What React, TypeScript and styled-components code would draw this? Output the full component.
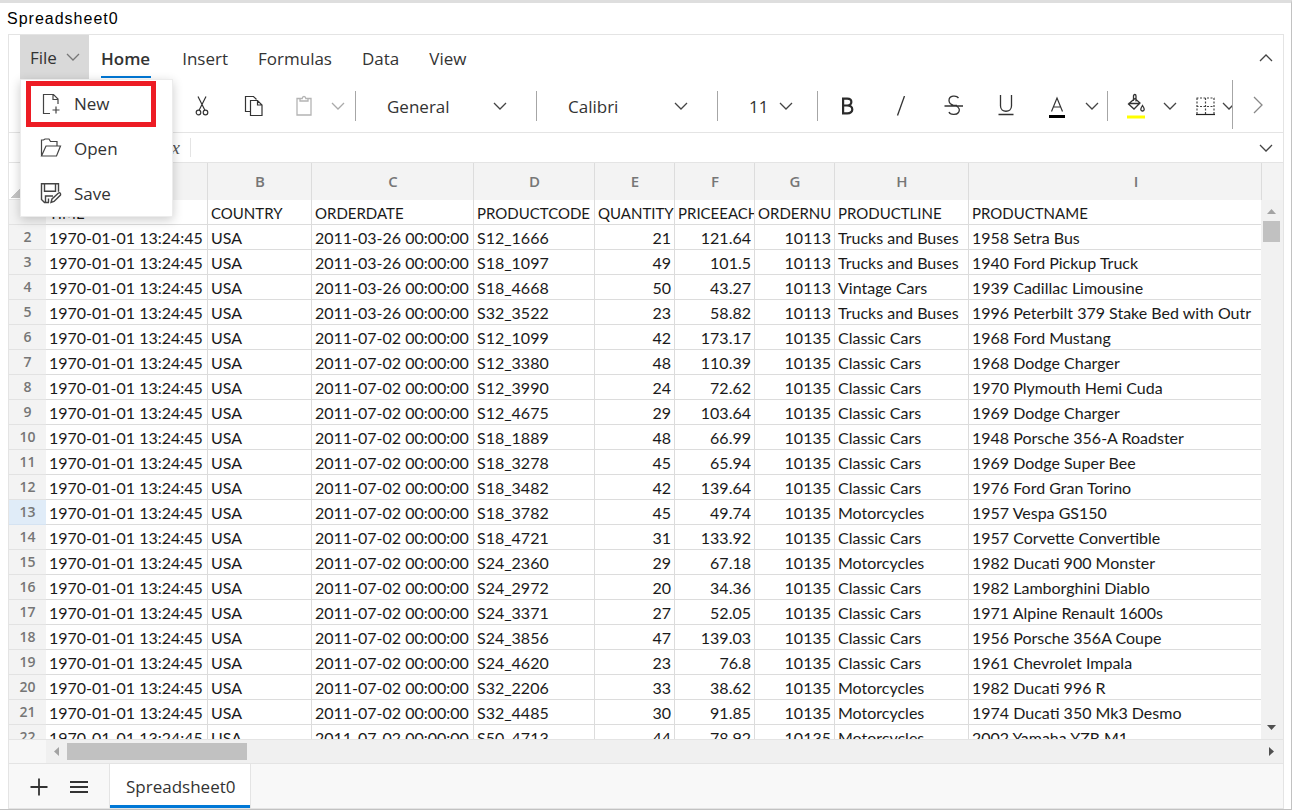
import React from "react";
import styled, { createGlobalStyle, css } from "styled-components";

const ui = '"Open Sans", "Noto Sans", sans-serif';
const cellFont = 'Lato, "Open Sans", sans-serif';
const line = "#dcdcdc";
const edge = "#e4e4e4";
const accent = "#0078d6";

const Global = createGlobalStyle`
  *, *::before, *::after { box-sizing: border-box; }
  body { margin: 0; background: #fff; }
  button, input, select { font: inherit; color: inherit; }
`;

const Page = styled.div`
  display: flex;
  flex-direction: column;
  height: 100vh;
  border-top: 3px solid #dedede;
  border-right: 1px solid #c2c2c2;
  border-bottom: 1px solid #c2c2c2;
  font-family: ${ui};
  font-size: 17px;
  color: #333;
`;

const Title = styled.h1`
  margin: 0;
  padding: 0 7px;
  font: 400 16px/31px "Liberation Sans", Arial, sans-serif;
  letter-spacing: 1px;
  color: #000;
`;

const Sheet = styled.main`
  flex: 1;
  min-height: 0;
  display: flex;
  flex-direction: column;
  margin: 0 7px 0 8px;
  border: 1px solid ${edge};
`;

const RibbonTabs = styled.nav`
  display: flex;
  height: 45px;
  padding-left: 11px;
`;

const FileArea = styled.div`
  position: relative;
`;

const plain = css`
  border: 0;
  padding: 0;
  background: transparent;
  cursor: pointer;
`;

const FileButton = styled.button`
  ${plain}
  display: flex;
  align-items: center;
  justify-content: space-between;
  width: 69px;
  height: 44px;
  padding: 0 9px 0 10px;
  background: #d9d9d9;
`;

const Menu = styled.ul`
  position: absolute;
  z-index: 5;
  top: 44px;
  left: 0;
  width: 153px;
  margin: 0;
  padding: 1px 0 0;
  list-style: none;
  background: #fff;
  border: 1px solid #ececec;
  box-shadow: 0 3px 10px rgba(0, 0, 0, 0.2);
`;

const MenuItem = styled.li`
  position: relative;
`;

const MenuButton = styled.button`
  ${plain}
  display: flex;
  align-items: center;
  gap: 12px;
  width: 100%;
  height: 45px;
  padding-left: 19px;
`;

const Highlight = styled.span`
  position: absolute;
  inset: 0 16px -1px 5px;
  border: 5px solid #ed1c24;
  pointer-events: none;
`;

const Tab = styled.button<{ $active?: boolean }>`
  ${plain}
  height: 45px;
  padding: 2px 16px;
  font-weight: ${(p) => (p.$active ? 600 : 400)};

  & > span {
    display: block;
    margin: 0 -1px;
    padding-top: 4px;
    line-height: 35px;
    border-bottom: 2px solid ${(p) => (p.$active ? accent : "transparent")};
  }
  &:first-of-type { padding: 2px 17px 2px 13px; }
  &:first-of-type > span { padding-right: 1px; }
`;

const Collapse = styled.button`
  ${plain}
  display: flex;
  align-items: center;
  justify-content: center;
  width: 34px;
  margin-left: auto;
`;

const Toolbar = styled.div`
  display: flex;
  height: 53px;
  border-bottom: 1px solid ${edge};
`;

const Tools = styled.div`
  flex: 1;
  min-width: 0;
  display: flex;
  align-items: center;
  padding-left: 167px;
  overflow: hidden;
`;

const ToolButton = styled.button<{ $w?: number; $gap?: number }>`
  ${plain}
  flex: none;
  display: flex;
  align-items: center;
  justify-content: center;
  width: ${(p) => p.$w ?? 52}px;
  height: 40px;
  margin-left: ${(p) => p.$gap ?? 0}px;
`;

const Separator = styled.span<{ $gap: number }>`
  flex: none;
  width: 1px;
  height: 30px;
  margin: 0 ${(p) => p.$gap}px;
  background: #a6a6a6;
`;

const SelectBox = styled.label<{ $w: number; $end: number }>`
  flex: none;
  display: grid;
  align-items: center;
  width: ${(p) => p.$w}px;

  & > * { grid-area: 1 / 1; }
  & > svg {
    justify-self: end;
    margin-right: ${(p) => p.$end}px;
    pointer-events: none;
  }
`;

const Select = styled.select`
  appearance: none;
  width: 100%;
  height: 40px;
  padding: 0 0 0 23px;
  border: 0;
  background: transparent;
`;

const ScrollNext = styled.button`
  ${plain}
  display: flex;
  align-items: center;
  justify-content: center;
  width: 51px;
  margin: 0 0 3px;
  border-left: 1px solid #a6a6a6;
`;

const FormulaBar = styled.div`
  display: flex;
  align-items: center;
  height: 30px;
  padding-left: 153px;
  border-bottom: 1px solid ${edge};
`;

const FxButton = styled.button`
  ${plain}
  width: 18px;
  font: italic 19px/26px "Liberation Serif", serif;
  color: #555;
  text-align: right;
`;

const FormulaInput = styled.input`
  flex: 1;
  height: 19px;
  margin-left: 10px;
  border: 0;
  border-left: 1px solid ${edge};
  outline: 0;
  background: transparent;
`;

const GridArea = styled.div`
  flex: 1;
  min-height: 0;
  display: flex;
`;

const TableClip = styled.div`
  flex: 1;
  min-width: 0;
  overflow: hidden;
`;

/* The last column runs on beneath the scrollbar. */
const Table = styled.table`
  width: calc(100% + 42px);
  table-layout: fixed;
  border-collapse: separate;
  border-spacing: 0;
  font-family: ${cellFont};
  font-size: 16px;
  color: #1a1a1a;
`;

const ColumnHead = styled.th`
  height: 37px;
  padding: 0 0 0 1px;
  border-right: 1px solid ${line};
  background: #f3f3f3;
  font: 600 15px/37px ${ui};
  color: #767676;
`;

const Corner = styled.td`
  padding: 0;
  height: 37px;
  vertical-align: bottom;
  border-bottom: 1px solid ${edge};
`;

const SelectAll = styled.button`
  ${plain}
  display: block;
  width: 10px;
  height: 10px;
  margin: 0 0 1px 2px;
  background: linear-gradient(135deg, transparent 50%, #c6c6c6 50%);
`;

const RowHead = styled.th<{ $active?: boolean }>`
  height: 25px;
  padding: 0;
  border-bottom: 1px solid ${(p) => (p.$active ? "#d5e3f2" : "#e2e2e2")};
  background: ${(p) => (p.$active ? "#e0ecf8" : "#f3f3f3")};
  font: 600 14px/22px ${ui};
  color: #767676;
`;

const Cell = styled.td<{ $right?: boolean; $small?: boolean }>`
  height: 25px;
  padding: 2px ${(p) => (p.$right ? 3 : 0)}px 0 3px;
  border-right: 1px solid ${line};
  border-bottom: 1px solid ${line};
  font-size: ${(p) => (p.$small ? 15 : 16)}px;
  line-height: 22px;
  text-align: ${(p) => (p.$right ? "right" : "left")};
  white-space: nowrap;
  overflow: hidden;
`;

const Side = styled.div`
  display: flex;
  flex-direction: column;
  width: 22px;
  background: #f1f1f1;
`;

const SideHead = styled.div`
  height: 37px;
  border-left: 1px solid ${line};
  background: #f3f3f3;
`;

const VTrack = styled.div`
  flex: 1;
  display: flex;
  flex-direction: column;
  align-items: center;
  justify-content: space-between;
  padding: 9px 1px 9px 0;
`;

const VThumb = styled.div`
  width: 17px;
  height: 21px;
  margin-bottom: auto;
  margin-top: 7px;
  background: #c1c1c1;
`;

const HRow = styled.div`
  display: flex;
  height: 25px;
  padding-left: 37px;
  border: solid ${edge};
  border-width: 1px 0;
  background: #f7f7f7;
`;

const HTrack = styled.div`
  flex: 1;
  display: flex;
  align-items: center;
  padding: 0 9px 0 8px;
  background: #f0f0f0;
`;

const HThumb = styled.div`
  width: 180px;
  height: 17px;
  margin: 0 auto 0 8px;
  background: #c1c1c1;
`;

const Footer = styled.footer`
  display: flex;
  height: 44px;
  padding-left: 10px;
  background: #f8f8f8;
`;

const FooterButton = styled.button`
  ${plain}
  display: flex;
  align-items: center;
  justify-content: center;
  width: 40px;
  padding-top: 2px;
`;

const SheetTab = styled.button`
  ${plain}
  margin-left: 10px;
  padding: 1px 15px 0 16px;
  border: solid ${edge};
  border-width: 0 1px;
  background: #fff;
  box-shadow: inset 0 -3px 0 ${accent};
  font-weight: 500;
`;

const Svg = ({ w, h, c = "#333", sw = 1, children }: { w: number; h: number; c?: string; sw?: number; children: React.ReactNode }) => (
  <svg width={w} height={h} viewBox={`0 0 ${w} ${h}`} fill="none" stroke={c} strokeWidth={sw} aria-hidden="true">
    {children}
  </svg>
);

const Chevron = ({ c = "#444", up = false }: { c?: string; up?: boolean }) => (
  <Svg w={14} h={8} c={c} sw={1.3}>
    <path d={up ? "M1 7 7 1l6 6" : "M1 1l6 6 6-6"} />
  </Svg>
);

const Arrow = ({ d, c, w = 9, h = 5 }: { d: string; c: string; w?: number; h?: number }) => (
  <svg width={w} height={h} viewBox={`0 0 ${w} ${h}`} fill={c} aria-hidden="true">
    <path d={d} />
  </svg>
);

const NewIcon = () => (
  <Svg w={22} h={22} c="#444" sw={1.2}>
    <path d="M10 20.500H3.500V1.500h10l4.500 4.500v5M13 1.500V6.500h5M16 13.500v7M12.500 17h7" />
  </Svg>
);
const OpenIcon = () => (
  <Svg w={22} h={22} c="#444" sw={1.2}>
    <path d="M1.500 17.500V2h2l1.500-1h4l1.500 2.500h6.500v4M1.500 18l4.500-10h14.500l-4 10z" />
  </Svg>
);
const SaveIcon = () => (
  <Svg w={22} h={22} c="#444" sw={1.4}>
    <path d="M9 19.500H4.500l-3-3V.700h17v8M4.500 .700v7.500h11v-7.500M5.500 19.500v-6.500H13M8.500 19.500v-4M11 19.500l1-3.500 6.500-6c1.500-.800 2.500.500 2 2l-6.500 6.500z" />
  </Svg>
);
const CutIcon = () => (
  <Svg w={14} h={22} sw={1.2}>
    <path d="M3 1.500l6.800 13.500M11 1.500 4.200 15" />
    <circle cx="3.500" cy="17.500" r="2.300" />
    <circle cx="10.500" cy="17.500" r="2.300" />
  </Svg>
);
const CopyIcon = () => (
  <Svg w={20} h={22} sw={1.2}>
    <path d="M6.500 16.500H1.500v-15h8l3 3M6.500 5.500h7l4.500 4.500v10.500H6.500zM13.500 5.500v4.500H18" />
  </Svg>
);
const PasteIcon = () => (
  <Svg w={16} h={22} c="#b4b4b4" sw={1.3}>
    <path d="M5 3.500H1v16.500h14V3.500h-4M4 6h8V3.500H9.800C9.500.800 6.500.800 6.200 3.500H4z" />
  </Svg>
);
const BoldIcon = () => (
  <Svg w={14} h={18} c="#2b2b2b" sw={2.2}>
    <path d="M2.100 .500v17M1.500 1.600h4.800c5.400 0 5.400 6.900 0 6.900H2M6 8.500c7 0 7 7.900.300 7.900H1.500" />
  </Svg>
);
const ItalicIcon = () => (
  <Svg w={10} h={20} sw={1.3}>
    <path d="M8.500 0 1.500 19.500" />
  </Svg>
);
const StrikeIcon = () => (
  <Svg w={20} h={22} sw={1.3}>
    <path d="M14.500 3C12.500 .200 5 .200 5 5.500c0 2.500 1.500 4 5 5h3M.500 11h18.500M12 11c3.500 1.500 4 4 2.500 6.500-2 2.800-8.500 2.500-9.500-.500" />
  </Svg>
);
const UnderlineIcon = () => (
  <Svg w={16} h={22} sw={1.3}>
    <path d="M2.500 0v11c0 7 11 7 11 0V0M.500 19.500h15" />
  </Svg>
);
const FontColorIcon = () => (
  <Svg w={16} h={24} sw={1.2}>
    <path d="M2.500 17.500 8 4 13.500 17.500M4.300 13h7.400" />
    <path d="M0 22.500h16" stroke="#000" strokeWidth="3" />
  </Svg>
);
const FillIcon = () => (
  <Svg w={18} h={26} sw={1.3}>
    <path d="M5.500 7.500 1.500 11l5.500 5 6-6L8 5.500zM1.500 10.500h11.500M6.500 8V3c0-2 2.500-2 2.500 0v5.500M15.500 12.500c-3 4.500-1.300 5.500 0 5.500s3-1 0-5.500z" />
    <path d="M0 24h18" stroke="#ff0" strokeWidth="3" />
  </Svg>
);
const BordersIcon = () => (
  <Svg w={19} h={19} c="#444" sw={1.2}>
    <path d="M.500 1h18M1 1v16M9.500 1v16M18 1v16M.500 9.500h18" strokeDasharray="2 1.500" />
    <path d="M0 17.500h19" stroke="#222" />
  </Svg>
);

const ribbonTabs = ["Home", "Insert", "Formulas", "Data", "View"];
const menuItems = [
  { label: "New", icon: <NewIcon />, marked: true },
  { label: "Open", icon: <OpenIcon /> },
  { label: "Save", icon: <SaveIcon /> },
];

const columns = [162, 104, 162, 121, 80, 80, 80, 134, undefined];
const headings = ["TIME", "COUNTRY", "ORDERDATE", "PRODUCTCODE", "QUANTITY", "PRICEEACH", "ORDERNU", "PRODUCTLINE", "PRODUCTNAME"];

const TIME = "1970-01-01 13:24:45";
const march = "2011-03-26 00:00:00";
const july = "2011-07-02 00:00:00";

const orders: [string, string, string, string, string, string, string][] = [
  [march, "S12_1666", "21", "121.64", "10113", "Trucks and Buses", "1958 Setra Bus"],
  [march, "S18_1097", "49", "101.5", "10113", "Trucks and Buses", "1940 Ford Pickup Truck"],
  [march, "S18_4668", "50", "43.27", "10113", "Vintage Cars", "1939 Cadillac Limousine"],
  [march, "S32_3522", "23", "58.82", "10113", "Trucks and Buses", "1996 Peterbilt 379 Stake Bed with Outr"],
  [july, "S12_1099", "42", "173.17", "10135", "Classic Cars", "1968 Ford Mustang"],
  [july, "S12_3380", "48", "110.39", "10135", "Classic Cars", "1968 Dodge Charger"],
  [july, "S12_3990", "24", "72.62", "10135", "Classic Cars", "1970 Plymouth Hemi Cuda"],
  [july, "S12_4675", "29", "103.64", "10135", "Classic Cars", "1969 Dodge Charger"],
  [july, "S18_1889", "48", "66.99", "10135", "Classic Cars", "1948 Porsche 356-A Roadster"],
  [july, "S18_3278", "45", "65.94", "10135", "Classic Cars", "1969 Dodge Super Bee"],
  [july, "S18_3482", "42", "139.64", "10135", "Classic Cars", "1976 Ford Gran Torino"],
  [july, "S18_3782", "45", "49.74", "10135", "Motorcycles", "1957 Vespa GS150"],
  [july, "S18_4721", "31", "133.92", "10135", "Classic Cars", "1957 Corvette Convertible"],
  [july, "S24_2360", "29", "67.18", "10135", "Motorcycles", "1982 Ducati 900 Monster"],
  [july, "S24_2972", "20", "34.36", "10135", "Classic Cars", "1982 Lamborghini Diablo"],
  [july, "S24_3371", "27", "52.05", "10135", "Classic Cars", "1971 Alpine Renault 1600s"],
  [july, "S24_3856", "47", "139.03", "10135", "Classic Cars", "1956 Porsche 356A Coupe"],
  [july, "S24_4620", "23", "76.8", "10135", "Classic Cars", "1961 Chevrolet Impala"],
  [july, "S32_2206", "33", "38.62", "10135", "Motorcycles", "1982 Ducati 996 R"],
  [july, "S32_4485", "30", "91.85", "10135", "Motorcycles", "1974 Ducati 350 Mk3 Desmo"],
  [july, "S50_4713", "44", "78.92", "10135", "Motorcycles", "2002 Yamaha YZR M1"],
];

export default function App() {
  return (
    <Page>
      <Global />
      <Title>Spreadsheet0</Title>
      <Sheet>
        <RibbonTabs>
          <FileArea>
            <FileButton aria-expanded="true">
              File
              <Chevron c="#777" />
            </FileButton>
            <Menu>
              {menuItems.map((m) => (
                <MenuItem key={m.label}>
                  <MenuButton>
                    {m.icon}
                    {m.label}
                  </MenuButton>
                  {m.marked && <Highlight />}
                </MenuItem>
              ))}
            </Menu>
          </FileArea>
          {ribbonTabs.map((t) => (
            <Tab key={t} $active={t === "Home"}>
              <span>{t}</span>
            </Tab>
          ))}
          <Collapse aria-label="Collapse toolbar">
            <Chevron up />
          </Collapse>
        </RibbonTabs>

        <Toolbar>
          <Tools>
            <ToolButton aria-label="Cut"><CutIcon /></ToolButton>
            <ToolButton aria-label="Copy"><CopyIcon /></ToolButton>
            <ToolButton aria-label="Paste" $w={48}><PasteIcon /></ToolButton>
            <ToolButton aria-label="Paste options" $w={19}><Chevron c="#aaa" /></ToolButton>
            <Separator $gap={8} />
            <SelectBox $w={164} $end={21}>
              <Select aria-label="Number format" defaultValue="General"><option>General</option></Select>
              <Chevron />
            </SelectBox>
            <Separator $gap={8} />
            <SelectBox $w={164} $end={21}>
              <Select aria-label="Font" defaultValue="Calibri"><option>Calibri</option></Select>
              <Chevron />
            </SelectBox>
            <Separator $gap={8} />
            <SelectBox $w={87} $end={20}>
              <Select aria-label="Font size" defaultValue="11"><option>11</option></Select>
              <Chevron />
            </SelectBox>
            <Separator $gap={4} />
            <ToolButton aria-label="Bold"><BoldIcon /></ToolButton>
            <ToolButton aria-label="Italic" $w={53}><ItalicIcon /></ToolButton>
            <ToolButton aria-label="Strikethrough" $w={53}><StrikeIcon /></ToolButton>
            <ToolButton aria-label="Underline"><UnderlineIcon /></ToolButton>
            <ToolButton aria-label="Font colour" $w={49}><FontColorIcon /></ToolButton>
            <ToolButton aria-label="Font colour options" $w={22}><Chevron /></ToolButton>
            <Separator $gap={4} />
            <ToolButton aria-label="Fill colour" $w={48}><FillIcon /></ToolButton>
            <ToolButton aria-label="Fill colour options" $w={20}><Chevron /></ToolButton>
            <ToolButton aria-label="Borders" $w={34} $gap={8}><BordersIcon /></ToolButton>
            <ToolButton aria-label="Border options" $w={14}><Chevron /></ToolButton>
          </Tools>
          <ScrollNext aria-label="Scroll toolbar right">
            <Svg w={10} h={18} c="#888" sw={1.3}><path d="M1 1l8 8-8 8" /></Svg>
          </ScrollNext>
        </Toolbar>

        <FormulaBar>
          <FxButton aria-label="Insert function">x</FxButton>
          <FormulaInput aria-label="Formula" />
          <Collapse as="button" aria-label="Expand formula bar"><Chevron /></Collapse>
        </FormulaBar>

        <GridArea>
          <TableClip>
            <Table>
              <colgroup>
                <col width={37} />
                {columns.map((w, i) => <col key={i} width={w} />)}
              </colgroup>
              <thead>
                <tr>
                  <Corner><SelectAll aria-label="Select all" /></Corner>
                  {columns.map((_, i) => (
                    <ColumnHead key={i} scope="col">{String.fromCharCode(65 + i)}</ColumnHead>
                  ))}
                </tr>
              </thead>
              <tbody>
                <tr>
                  <RowHead scope="row">1</RowHead>
                  {headings.map((h) => <Cell key={h} $small>{h}</Cell>)}
                </tr>
                {orders.map((o, r) => (
                  <tr key={r}>
                    <RowHead scope="row" $active={r + 2 === 13}>{r + 2}</RowHead>
                    {[TIME, "USA", ...o].map((v, i) => (
                      <Cell key={i} $right={i >= 4 && i <= 6}>{v}</Cell>
                    ))}
                  </tr>
                ))}
              </tbody>
            </Table>
          </TableClip>
          <Side>
            <SideHead />
            <VTrack>
              <Arrow d="M0 5 4.500 0 9 5z" c="#a3a3a3" />
              <VThumb />
              <Arrow d="M0 0h9L4.500 5z" c="#505050" />
            </VTrack>
          </Side>
        </GridArea>

        <HRow>
          <HTrack>
            <Arrow d="M5 0v9L0 4.500z" c="#a3a3a3" w={5} h={9} />
            <HThumb />
            <Arrow d="M0 0v9l5-4.500z" c="#505050" w={5} h={9} />
          </HTrack>
        </HRow>

        <Footer>
          <FooterButton aria-label="Add sheet">
            <Svg w={18} h={18} sw={1.8}><path d="M9 .500v17M.500 9h17" /></Svg>
          </FooterButton>
          <FooterButton aria-label="List all sheets">
            <Svg w={18} h={14} sw={1.8}><path d="M0 2h18M0 7h18M0 12h18" /></Svg>
          </FooterButton>
          <SheetTab>Spreadsheet0</SheetTab>
        </Footer>
      </Sheet>
    </Page>
  );
}
